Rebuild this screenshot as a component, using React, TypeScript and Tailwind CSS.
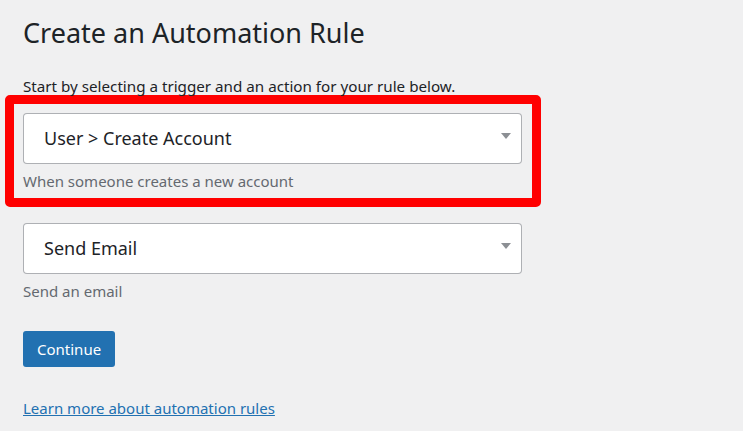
export default function App() {
  const font = { fontFamily: '"Segoe UI", "Noto Sans", "Open Sans", sans-serif' }
  return (
    <div className="min-h-[431px] w-[743px] bg-[#f0f0f1] text-[#1d2327] pl-[23px] pt-[14px]" style={font}>
      <h1 className="text-[27px] leading-[38px] font-normal">Create an Automation Rule</h1>
      <p className="mt-[25px] text-[15.2px] leading-[18px]">Start by selecting a trigger and an action for your rule below.</p>

      {/* trigger, highlighted */}
      <div className="-ml-[18px] w-[536px] rounded-[5px] border-[9px] border-[#ff0000] pl-[9px] pt-[9px] pb-[8px]">
        <div className="flex h-[51px] w-[499px] items-center justify-between rounded-[4px] border border-[#8c8f94]/70 bg-white pl-[20px] pr-[10px]">
          <span className="text-[18px]">User &gt; Create Account</span>
          <span className="mb-[6px] h-0 w-0 border-x-[5px] border-t-[6px] border-x-transparent border-t-[#8c8f94]" />
        </div>
        <div className="mt-[8px] text-[15px] leading-[18px] text-[#646970]">When someone creates a new account</div>
      </div>

      {/* action */}
      <div className="mt-[16px] flex h-[51px] w-[499px] items-center justify-between rounded-[4px] border border-[#8c8f94]/70 bg-white pl-[20px] pr-[10px]">
        <span className="text-[18px]">Send Email</span>
        <span className="mb-[6px] h-0 w-0 border-x-[5px] border-t-[6px] border-x-transparent border-t-[#8c8f94]" />
      </div>
      <div className="mt-[8px] text-[15px] leading-[18px] text-[#646970]">Send an email</div>

      <button className="mt-[31px] h-[36px] rounded-[3px] bg-[#2271b1] px-[14px] text-[15px] text-white">Continue</button>

      <div className="mt-[29px]">
        <a href="#" className="text-[15px] text-[#2271b1] underline">Learn more about automation rules</a>
      </div>
    </div>
  )
}
